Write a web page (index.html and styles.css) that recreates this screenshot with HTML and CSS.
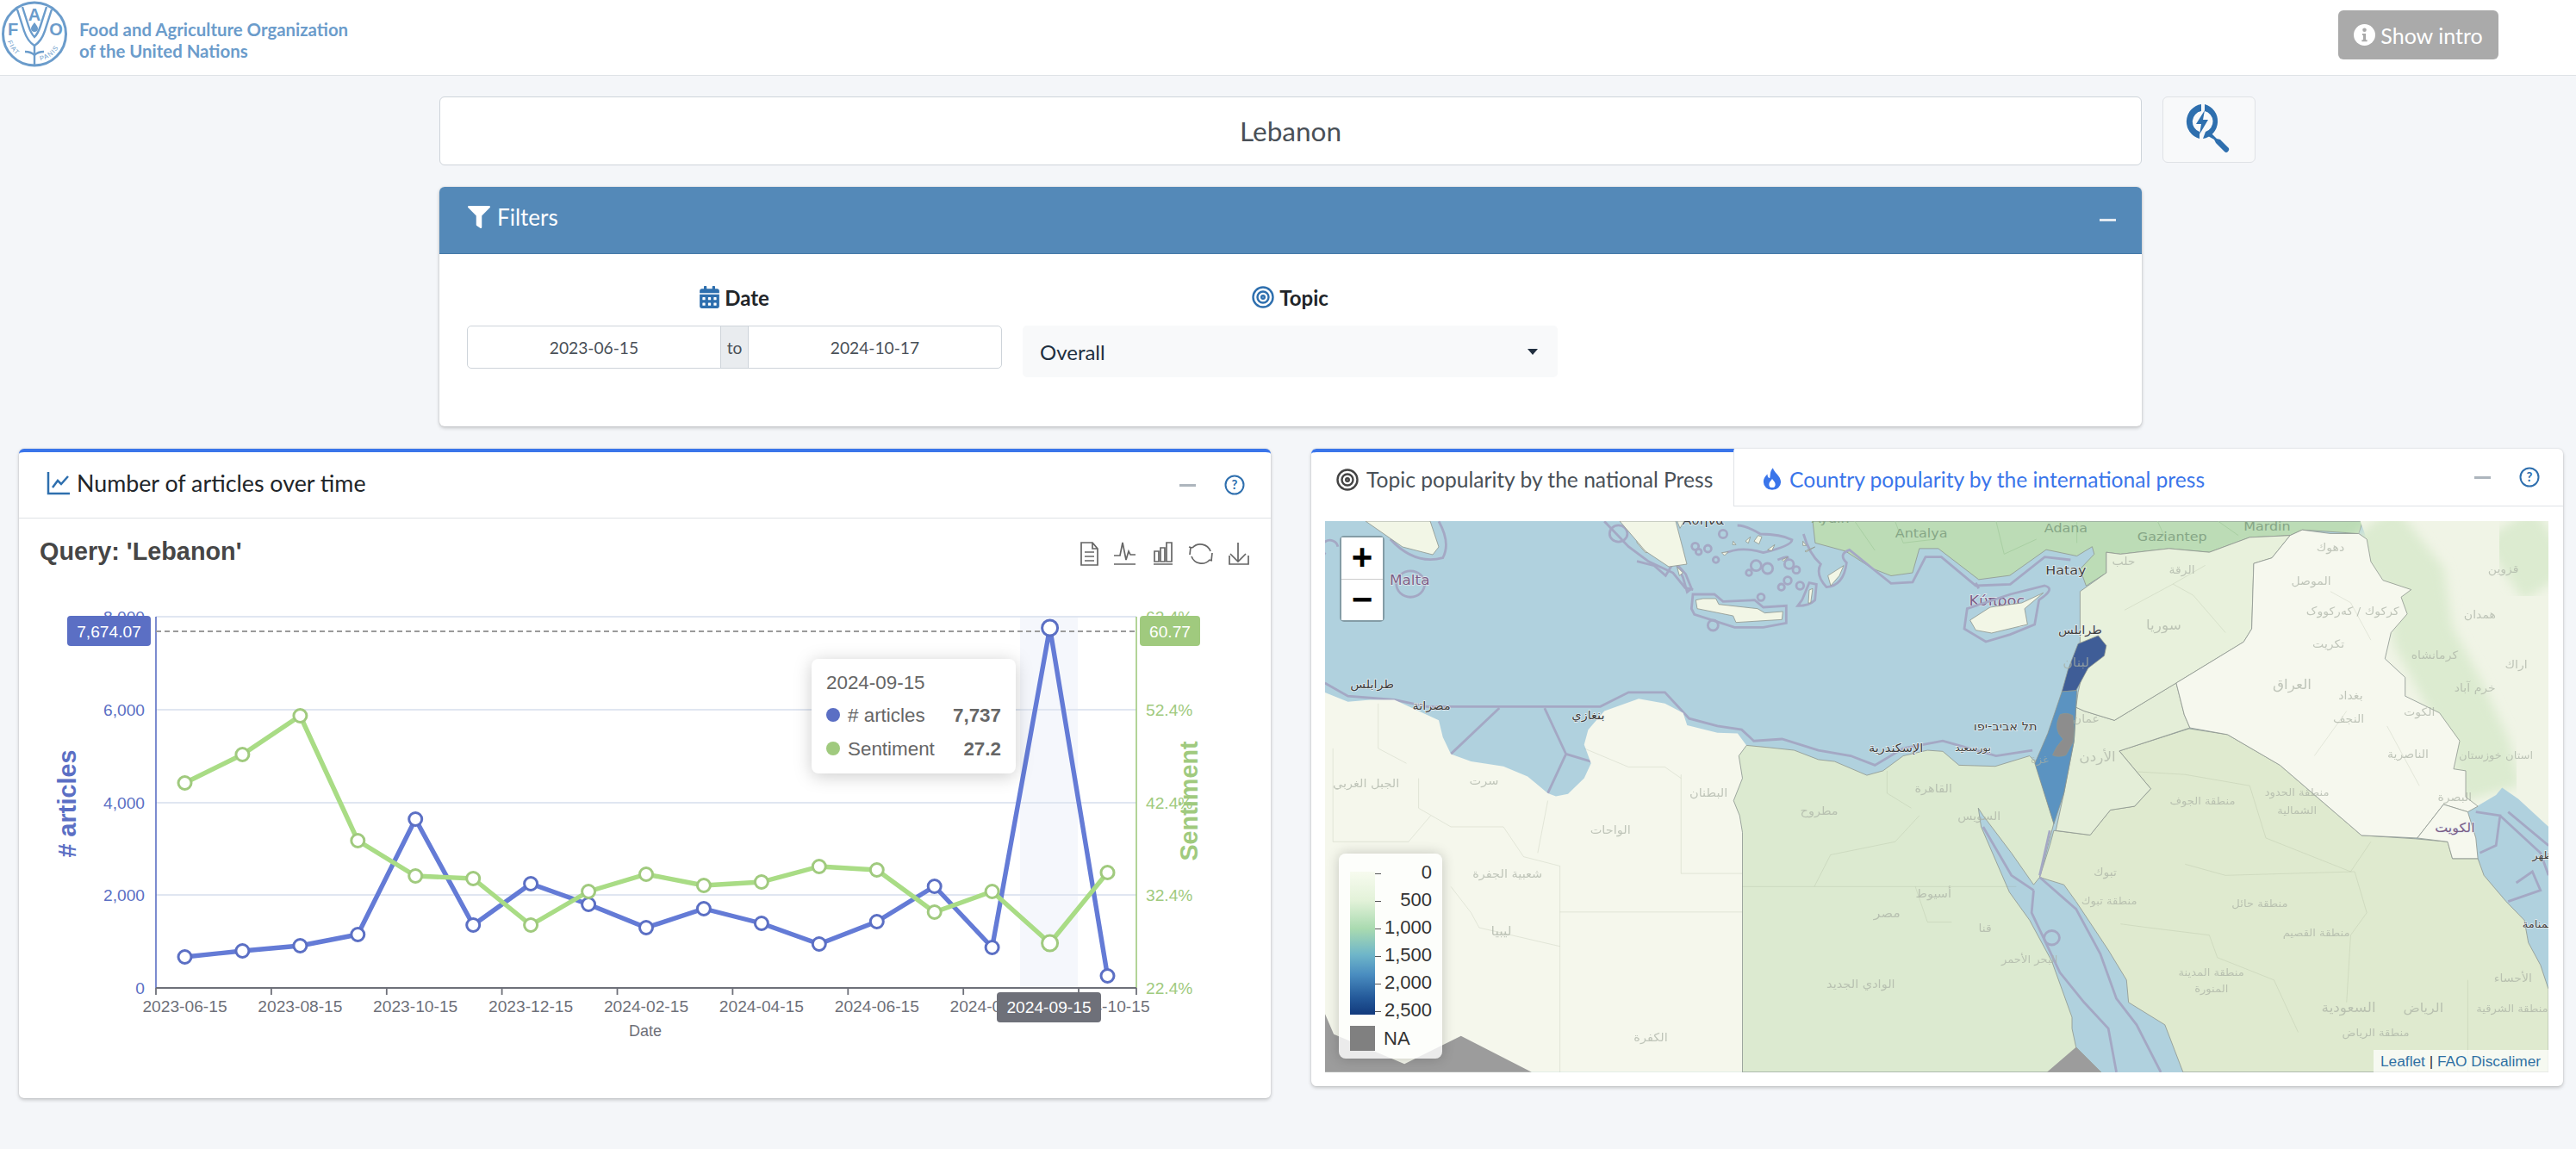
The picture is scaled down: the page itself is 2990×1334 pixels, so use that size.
FILE: index.html
```html
<!DOCTYPE html>
<html lang="en">
<head>
  <meta charset="UTF-8" />
  <title>FAO Media Monitor</title>
  <link rel="stylesheet" href="styles.css">
</head>
<body>
  <header class="topbar">
    <div class="brand">
      <svg class="brand-logo" viewBox="0 0 80 80">
        <defs>
          <path id="logoArcL" d="M9 48 A32 32 0 0 0 37 71" />
          <path id="logoArcR" d="M43 71 A32 32 0 0 0 71 48" />
        </defs>
        <circle cx="40" cy="39.5" r="36.5" fill="none" stroke="#6b9ccb" stroke-width="3" />
        <g fill="none" stroke="#6b9ccb" stroke-width="2.4">
          <path d="M20 11 L28 36 Q32 48 40 53 Q48 48 52 36 L60 11" />
          <path d="M26 8 L33 30 Q36 39 40 43 Q44 39 47 30 L54 8" />
          <path d="M40 53 V77" />
          <path d="M29 60 Q36 60 40 64 Q44 60 51 60" />
        </g>
        <path d="M40 26 q-4 5 -4 7 a4 4 0 0 0 8 0 q0 -2 -4 -7z" fill="#6b9ccb" />
        <g class="logo-letters">
          <text x="9" y="41">F</text>
          <text x="40" y="24" text-anchor="middle">A</text>
          <text x="65" y="41" text-anchor="middle">O</text>
        </g>
        <g class="logo-motto">
          <text><textPath href="#logoArcL">FIAT</textPath></text>
          <text><textPath href="#logoArcR" startOffset="4">PANIS</textPath></text>
        </g>
      </svg>
      <div class="brand-name">Food and Agriculture Organization<br>of the United Nations</div>
    </div>
    <div class="intro-btn">
      <svg class="icon-info" viewBox="0 0 24 24">
        <circle cx="12" cy="12" r="12" fill="#fff" />
        <circle cx="12" cy="6.5" r="2.2" fill="#aaa" />
        <path d="M9.5 10.5h4v7h1.5v2h-6v-2h1.5v-5h-1z" fill="#aaa" />
      </svg>
      Show intro
    </div>
  </header>

  <main class="page">
    <div class="search-row">
      <div class="search-box">Lebanon</div>
      <div class="search-btn">
        <svg viewBox="3 0 62 62" width="62" height="62">
          <path d="M25 1 A20.500 20.500 0 0 0 23 41 V33 A12.500 12.500 0 0 1 25 9z" fill="#2e6fae" />
          <path d="M29 1 A20.500 20.500 0 0 1 27 41 L30 33 A12.500 12.500 0 0 0 29 9z" fill="#2e6fae" />
          <path d="M29 8 L19 24 H25 L23 36 L33 19 H27z" fill="#2e6fae" />
          <path d="M37 35 L43 41 L47 42 L57 52 Q58 54 56 56 Q54 58 52 56 L42 46 L40 42 L33 38z" fill="#2e6fae" />
        </svg>
      </div>
    </div>

    <section class="filter-card">
      <div class="filter-head">
        <span class="filter-title">
          <svg class="icon-funnel" viewBox="0 0 512 512"><path d="M487.976 0H24.028C2.71 0-8.047 25.866 7.058 40.971L192 225.941V432c0 7.831 3.821 15.17 10.237 19.662l80 55.98C298.02 518.69 320 507.493 320 487.98V225.941l184.947-184.97C520.021 25.896 509.338 0 487.976 0z" /></svg>
          Filters
        </span>
        <span class="collapse-bar light"></span>
      </div>
      <div class="filter-body">
        <div class="filter-col">
          <div class="filter-label">
            <svg class="icon-cal" viewBox="0 0 448 512"><path d="M0 464c0 26.5 21.5 48 48 48h352c26.5 0 48-21.5 48-48V192H0v272zm320-196c0-6.6 5.4-12 12-12h40c6.6 0 12 5.4 12 12v40c0 6.6-5.4 12-12 12h-40c-6.6 0-12-5.4-12-12v-40zm0 128c0-6.6 5.4-12 12-12h40c6.6 0 12 5.4 12 12v40c0 6.6-5.4 12-12 12h-40c-6.6 0-12-5.4-12-12v-40zM192 268c0-6.6 5.4-12 12-12h40c6.6 0 12 5.4 12 12v40c0 6.6-5.4 12-12 12h-40c-6.6 0-12-5.4-12-12v-40zm0 128c0-6.6 5.4-12 12-12h40c6.6 0 12 5.4 12 12v40c0 6.6-5.4 12-12 12h-40c-6.6 0-12-5.4-12-12v-40zM64 268c0-6.6 5.4-12 12-12h40c6.6 0 12 5.4 12 12v40c0 6.6-5.4 12-12 12H76c-6.600 0-12-5.4-12-12v-40zm0 128c0-6.6 5.4-12 12-12h40c6.6 0 12 5.4 12 12v40c0 6.6-5.4 12-12 12H76c-6.6 0-12-5.4-12-12v-40zM400 64h-48V16c0-8.8-7.2-16-16-16h-32c-8.8 0-16 7.2-16 16v48H160V16c0-8.8-7.2-16-16-16h-32c-8.8 0-16 7.2-16 16v48H48C21.5 64 0 85.5 0 112v48h448v-48c0-26.5-21.5-48-48-48z" /></svg>
            Date
          </div>
          <div class="date-range">
            <div class="date-val">2023-06-15</div>
            <div class="date-to">to</div>
            <div class="date-val">2024-10-17</div>
          </div>
        </div>
        <div class="filter-col">
          <div class="filter-label">
            <svg class="icon-target blue" viewBox="0 0 26 26"><circle cx="13" cy="13" r="11.500" /><circle cx="13" cy="13" r="6.500" /><circle cx="13" cy="13" r="1.800" /></svg>
            Topic
          </div>
          <div class="select-box">Overall<span class="select-arrow"></span></div>
        </div>
      </div>
    </section>

    <div class="panels">
      <!-- left: articles chart -->
      <section class="panel">
        <div class="panel-head">
          <div class="panel-title">
            <svg class="icon-chartline" viewBox="0 0 28 28"><path d="M2 1 V26 H27" /><path d="M7 19 L13 11 L17 15 L25 6" /></svg>
            Number of articles over time
          </div>
          <div class="panel-tools">
            <span class="collapse-bar"></span>
            <svg class="icon-help" viewBox="0 0 24 24"><circle cx="12" cy="12" r="10.500" /><text x="12" y="17" text-anchor="middle">?</text></svg>
          </div>
        </div>
        <svg class="chart" viewBox="22 602 1453 673" width="1453" height="673">
          <text class="chart-title" x="46" y="650">Query: 'Lebanon'</text>

          <g class="toolbox">
            <path d="M1255 630h13l6 7v19h-19z M1268 630v7h6 M1259 641h11 M1259 646h11 M1259 651h11" />
            <path d="M1293 645h7l3-15 4 20 3-10 2 4h6 M1293 655h25" />
            <path d="M1339 655h22 M1340 640h5v12h-5z M1347 636h5v16h-5z M1354 630h6v22h-6z" />
            <path d="M1384 636 A12.500 12.500 0 0 1 1405 640 M1381 644 l1 -9 M1404 650 A12.500 12.500 0 0 1 1383 646 M1407 642 l-1 9 M1384 636l-4-1 M1403 650l4 1" />
            <path d="M1437 630v22 M1428 643l9 9 9-9 M1427 645v10h22v-10" />
          </g>

          <rect class="band" x="1184" y="716" width="67" height="431" />
          <g class="grid">
            <path d="M181 716H1319 M181 824H1319 M181 932H1319 M181 1039H1319" />
          </g>
          <path class="axis-left" d="M181 716V1147" />
          <path class="axis-right" d="M1319 716V1147" />
          <path class="axis-bottom" d="M181 1147H1319 M181 1147v8 M314.900 1147v8 M448.800 1147v8 M582.600 1147v8 M716.500 1147v8 M850.400 1147v8 M984.300 1147v8 M1118.200 1147v8 M1252 1147v8 M1319 1147v8" />

          <g class="tick-left">
            <text x="168" y="716">8,000</text>
            <text x="168" y="824">6,000</text>
            <text x="168" y="932">4,000</text>
            <text x="168" y="1039">2,000</text>
            <text x="168" y="1147">0</text>
          </g>
          <g class="tick-right">
            <text x="1330" y="716">62.4%</text>
            <text x="1330" y="824">52.4%</text>
            <text x="1330" y="932">42.4%</text>
            <text x="1330" y="1039">32.4%</text>
            <text x="1330" y="1147">22.4%</text>
          </g>
          <g class="tick-x">
            <text x="214.500" y="1168">2023-06-15</text>
            <text x="348.400" y="1168">2023-08-15</text>
            <text x="482.200" y="1168">2023-10-15</text>
            <text x="616.100" y="1168">2023-12-15</text>
            <text x="750" y="1168">2024-02-15</text>
            <text x="883.900" y="1168">2024-04-15</text>
            <text x="1017.800" y="1168">2024-06-15</text>
            <text x="1151.600" y="1168">2024-08-15</text>
            <text x="1285.500" y="1168">2024-10-15</text>
          </g>
          <text class="x-name" x="749" y="1197">Date</text>
          <text class="y-name blue" transform="translate(78 933) rotate(-90)"># articles</text>
          <text class="y-name green" transform="translate(1380 930) rotate(-90)">Sentiment</text>

          <path class="pointer-line" d="M181 733H1319" />

          <polyline class="line-blue" points="214.500,1111 281.400,1104 348.400,1098 415.300,1085 482.200,951 549.200,1074 616.100,1026 683.100,1050 750,1077 816.900,1055 883.900,1072 950.800,1096 1017.800,1070 1084.700,1029 1151.600,1100 1218.600,729 1285.500,1133" />
          <g class="dots-blue">
            <circle cx="214.500" cy="1111" r="7.500" /><circle cx="281.400" cy="1104" r="7.500" /><circle cx="348.400" cy="1098" r="7.500" /><circle cx="415.300" cy="1085" r="7.500" /><circle cx="482.200" cy="951" r="7.500" /><circle cx="549.200" cy="1074" r="7.500" /><circle cx="616.100" cy="1026" r="7.500" /><circle cx="683.100" cy="1050" r="7.500" /><circle cx="750" cy="1077" r="7.500" /><circle cx="816.900" cy="1055" r="7.500" /><circle cx="883.900" cy="1072" r="7.500" /><circle cx="950.800" cy="1096" r="7.500" /><circle cx="1017.800" cy="1070" r="7.500" /><circle cx="1084.700" cy="1029" r="7.500" /><circle cx="1151.600" cy="1100" r="7.500" /><circle cx="1218.600" cy="729" r="9" /><circle cx="1285.500" cy="1133" r="7.500" />
          </g>
          <polyline class="line-green" points="214.500,909 281.400,876 348.400,831 415.300,976 482.200,1017 549.200,1020 616.100,1074 683.100,1035 750,1015 816.900,1028 883.900,1024 950.800,1006 1017.800,1010 1084.700,1059 1151.600,1035 1218.600,1095 1285.500,1013" />
          <g class="dots-green">
            <circle cx="214.500" cy="909" r="7.500" /><circle cx="281.400" cy="876" r="7.500" /><circle cx="348.400" cy="831" r="7.500" /><circle cx="415.300" cy="976" r="7.500" /><circle cx="482.200" cy="1017" r="7.500" /><circle cx="549.200" cy="1020" r="7.500" /><circle cx="616.100" cy="1074" r="7.500" /><circle cx="683.100" cy="1035" r="7.500" /><circle cx="750" cy="1015" r="7.500" /><circle cx="816.900" cy="1028" r="7.500" /><circle cx="883.900" cy="1024" r="7.500" /><circle cx="950.800" cy="1006" r="7.500" /><circle cx="1017.800" cy="1010" r="7.500" /><circle cx="1084.700" cy="1059" r="7.500" /><circle cx="1151.600" cy="1035" r="7.500" /><circle cx="1218.600" cy="1095" r="9" /><circle cx="1285.500" cy="1013" r="7.500" />
          </g>

          <rect class="pill-blue" x="78" y="715" width="97" height="35" rx="4" />
          <text class="pill-text" x="126.500" y="733">7,674.07</text>
          <rect class="pill-green" x="1323" y="715" width="70" height="35" rx="4" />
          <text class="pill-text" x="1358" y="733">60.77</text>
          <rect class="pill-gray" x="1157" y="1152" width="121" height="35" rx="4" />
          <text class="pill-text" x="1217.500" y="1169">2024-09-15</text>

          <g class="tip">
            <rect class="tip-box" x="942" y="765" width="237" height="133" rx="8" />
            <text class="tip-date" x="959" y="792">2024-09-15</text>
            <circle cx="967" cy="830" r="8" fill="#5b6fc4" />
            <text class="tip-name" x="984" y="830"># articles</text>
            <text class="tip-val" x="1162" y="830">7,737</text>
            <circle cx="967" cy="869" r="8" fill="#a0ca7e" />
            <text class="tip-name" x="984" y="869">Sentiment</text>
            <text class="tip-val" x="1162" y="869">27.2</text>
          </g>
        </svg>
      </section>

      <!-- right: map tabs -->
      <section class="panel panel-map">
        <div class="tab-head">
          <div class="tab active">
            <svg class="icon-target dark" viewBox="0 0 26 26"><circle cx="13" cy="13" r="11.500" /><circle cx="13" cy="13" r="6.500" /><circle cx="13" cy="13" r="1.800" /></svg>
            Topic popularity by the national Press
          </div>
          <div class="tab link">
            <svg class="icon-fire" viewBox="0 0 24 28"><path fill-rule="evenodd" d="M13 0 C14 6 23 10 23 18 A11 10 0 0 1 1 18 C1 13 4 10 6 8 C6 11 7 13 9 13 C10 8 9 4 13 0z M12 14 C10 17 8 18 8 21 A4 4 0 0 0 16 21 C16 18 14 17 12 14z" /></svg>
            Country popularity by the international press
          </div>
          <div class="panel-tools tab-tools">
            <span class="collapse-bar"></span>
            <svg class="icon-help" viewBox="0 0 24 24"><circle cx="12" cy="12" r="10.500" /><text x="12" y="17" text-anchor="middle">?</text></svg>
          </div>
        </div>
        <div class="map">
          <svg class="map-svg" viewBox="1538 605 1420 640" width="1420" height="640">
            <defs>
              <filter id="soft" x="-20%" y="-20%" width="140%" height="140%"><feGaussianBlur stdDeviation="14" /></filter>
            </defs>
            <rect x="1538" y="605" width="1420" height="640" fill="#b0d1de" />

            <!-- drawn in crop coords, U = (x-1520)*2.133, V = (y-600)*2.306 -->
            <g transform="translate(1520 600) scale(.46875 .43367)">
              <g class="sea-lines">
                <path d="M38 445 L95 480 L210 490 L290 508 H720 L790 470 H880 L940 540 L1010 560 L1070 570 L1100 600 L1170 595 L1260 625 L1340 640 L1400 665 L1470 620 L1568 600 L1700 640 L1790 625" />
                <path d="M470 512 L350 635 M582 512 L635 635 L590 740 M635 635 L697 655" />
                <circle cx="250" cy="180" r="35" />
                <path d="M40 100 a20 20 0 1 1 30 -20 M200 60 Q260 130 330 110 Q350 70 320 12 M730 12 L790 80 L840 120 L900 150 L930 190 L950 195" />
                <circle cx="765" cy="45" r="22" />
              </g>
              <path class="land libya" d="M38 470 L95 495 L150 490 L210 490 L290 530 L320 545 L330 590 L350 635 L400 655 L480 668 L540 695 L590 740 L610 748 L640 742 L680 700 L697 660 L680 610 L690 570 L730 520 L815 487 L880 500 L925 525 L935 558 L1010 578 L1060 580 L1082 612 L1063 640 L1072 700 L1050 760 L1065 800 L1072 845 V1487 H38z" />
              <path class="inner" d="M58 620 V870 M58 870 H245 L300 800 M170 500 V620 L240 660 M270 700 V780 L350 830 H480 L530 910 L620 935 V1487 M620 1058 H1072 M920 690 V955 H1072 M590 760 L565 900 M680 620 L790 670 H880 L920 700 M400 1060 L420 1100 L620 1150 M350 990 L400 1060" />
              <path class="land sudan" d="M38 1330 L60 1385 L235 1465 L375 1390 L550 1487 H38z" />
              <path class="land egypt" d="M1082 612 L1140 618 L1200 625 L1260 650 L1300 655 L1380 692 L1420 680 L1470 640 L1530 625 L1568 628 L1608 665 L1698 668 L1783 640 L1796 655 L1843 820 L1808 965 L1793 985 L1738 900 L1668 800 L1656 780 L1663 830 L1733 1005 L1783 1080 L1838 1190 L1888 1340 L1888 1370 L1898 1420 L1960 1487 H1072 V845 L1065 800 L1050 760 L1072 700 L1063 640z" />
              <path class="inner" d="M1072 990 H1750 M1250 990 L1290 905 L1450 870 L1510 800 M1500 990 L1530 1085 H1590 M1430 680 V740 L1490 780" />
              <path class="land turkey" d="M1246 12 L1252 70 L1327 92 L1393 138 L1440 158 L1493 150 L1510 85 L1557 85 L1657 168 L1734 157 L1824 88 L1900 105 L1938 80 L1943 100 L1908 140 L1923 185 L1973 150 L1973 95 L2008 100 L2128 85 L2228 95 L2328 55 L2428 50 L2458 35 L2598 45 L2608 12z" />
              <path class="inner turkey-lines" d="M1350 12 L1400 90 M1450 12 L1470 70 L1550 60 M1700 12 L1720 100 L1800 60 M1900 12 V70 M2100 12 L2120 60 M2250 12 L2300 50" />
              <path class="land sudan" d="M1826 1487 L1898 1420 L1960 1487z" />

              <g transform="translate(1568 0)">
                <path class="land iran" d="M1030 0 H1500 V860 L1325 780 L1295 750 L1295 680 L1265 675 L1280 600 L1230 525 L1145 480 V430 L1095 380 L1110 310 L1150 260 L1135 215 L1160 195 L1090 170 L1060 120 L1050 60z" />
                <path class="zagros" filter="url(#soft)" d="M1060 20 L1170 170 L1190 320 L1260 460 L1330 620 L1360 740" />
                <path class="zagros" filter="url(#soft)" d="M1400 20 L1500 180" />
                <path class="land gulf" d="M1315 780 L1370 745 L1385 725 L1425 755 L1500 830 V1265 L1480 1200 L1450 1140 L1440 1080 L1395 1030 L1340 960 L1325 915 L1320 860z" />
                <path class="land saudi" d="M275 840 L365 852 L415 785 L475 775 L515 728 L437 627 L610 567 L705 583 L835 665 L1037 853 L1170 862 L1250 870 L1262 915 L1325 915 L1340 960 L1395 1030 L1440 1080 L1450 1140 L1480 1200 L1500 1265 V1487 H595 L550 1360 L460 1300 L455 1240 L410 1160 L330 1030 L300 985 L240 965 L265 880z" />
                <path class="inner" d="M440 680 L600 690 L760 720 L800 860 L1010 950 L1060 870 M600 930 L700 960 L1020 950 L1050 1060 L1010 1120 L1000 1300 M440 1090 L510 1100 L660 1120 L680 1180 L820 1240 L880 1380 M1300 1240 V1487" />
                <path class="land jordan" d="M330 510 L350 520 L425 545 L578 445 L598 530 L612 565 L437 627 L515 728 L475 775 L415 785 L365 852 L280 840 L300 740 L325 600z" />
                <path class="land syria" d="M340 200 L405 150 V95 L440 100 L560 85 L660 95 L760 55 L860 50 L815 110 L770 125 L765 300 L745 335 L578 445 L425 545 L350 520 L330 510 L335 470 L350 400 L340 340z" />
                <path class="inner" d="M570 180 L620 210 L700 310 M450 250 L570 180 L650 130" />
                <path class="land iraq" d="M860 50 L890 35 L960 45 L1030 45 L1050 60 L1060 120 L1090 170 L1160 195 L1135 215 L1150 260 L1110 310 L1095 380 L1145 430 V480 L1230 525 L1280 600 L1265 675 L1295 680 V750 L1325 775 L1300 790 L1240 770 L1175 860 L1037 853 L835 665 L705 583 L612 565 L598 530 L578 445 L745 335 L765 300 L770 125 L815 110z" />
                <path class="land iraq" d="M1240 770 L1300 790 L1320 860 L1325 915 H1262 L1250 870 L1175 860z" />
                <path class="inner" d="M960 200 L1010 230 L1060 330 M1000 520 L920 640 M1100 560 L1180 720" />
                <path class="sea-lines-path" d="M240 965 L330 1050 L390 1170 L430 1290 L480 1360 L540 1487 M225 1000 L220 1060 L290 1220 L350 1300 L410 1370 L430 1487 M100 830 L170 960 L225 1000 M265 840 L240 960 M1320 790 L1380 800 L1370 880 L1330 900 M1380 800 L1480 900 L1500 960 M1400 1030 L1480 1000 L1460 950 L1420 980 M1400 790 L1500 880" />
                <circle class="sea-lines-path" cx="270" cy="1127" r="19" />
                <path class="land lebanon" d="M335 340 L385 318 L405 345 L400 372 L360 405 L330 465 L295 468 L310 410z" />
                <path class="land israel" d="M295 468 L332 465 L330 510 L325 600 L300 740 L275 822 L228 660 L260 580z" />
                <path class="land westbank" d="M290 530 Q305 522 322 532 Q328 570 322 605 L305 638 Q285 645 272 638 Q280 615 298 595 Q272 570 290 530z" />
              </g>

              <g class="lbl-faint">
                <text x="140" y="725" font-size="31">الجبل الغربي</text>
                <text x="432" y="718" font-size="31">سرت</text>
                <text x="988" y="750" font-size="31">البطنان</text>
                <text x="745" y="848" font-size="31">الواحات</text>
                <text x="490" y="966" font-size="31">شعبية الجفرة</text>
                <text x="475" y="1120" font-size="34">ليبيا</text>
                <text x="845" y="1405" font-size="31">الكفرة</text>
                <text x="1262" y="798" font-size="31">مطروح</text>
                <text x="1430" y="1072" font-size="34">مصر</text>
                <text x="1365" y="1262" font-size="31">الوادي الجديد</text>
                <text x="1545" y="1020" font-size="31">أسيوط</text>
                <text x="1545" y="738" font-size="31">القاهرة</text>
              </g>
              <g class="lbl-dark">
                <text x="155" y="458" font-size="31">طرابلس</text>
                <text x="302" y="516" font-size="31">مصراتة</text>
                <text x="690" y="542" font-size="31">بنغازي</text>
                <text x="1452" y="630" font-size="31">الإسكندرية</text>
                <text x="975" y="20" font-size="33">Αθήνα</text>
              </g>
              <text class="lbl-purple" x="248" y="182" font-size="36">Malta</text>
              <g class="lbl-green">
                <text x="1515" y="55" font-size="34">Antalya</text>
                <text x="1290" y="16" font-size="34">Aydın</text>
              </g>

              <g transform="translate(1568 0)">
                <g class="lbl-green">
                  <text x="305" y="42" font-size="34">Adana</text>
                  <text x="568" y="65" font-size="34">Gaziantep</text>
                  <text x="803" y="38" font-size="34">Mardin</text>
                </g>
                <g class="lbl-faint">
                  <text x="448" y="128" font-size="30">حلب</text>
                  <text x="592" y="152" font-size="30">الرقة</text>
                  <text x="547" y="302" font-size="36">سوريا</text>
                  <text x="330" y="402" font-size="34">لبنان</text>
                  <text x="960" y="92" font-size="30">دهوك</text>
                  <text x="912" y="182" font-size="30">الموصل</text>
                  <text x="1015" y="262" font-size="30">كركوك / کەرکووک</text>
                  <text x="1388" y="150" font-size="30">قزوين</text>
                  <text x="1330" y="272" font-size="30">همدان</text>
                  <text x="955" y="350" font-size="30">تكريت</text>
                  <text x="1218" y="380" font-size="30">كرمانشاه</text>
                  <text x="1420" y="405" font-size="30">اراك</text>
                  <text x="865" y="462" font-size="36">العراق</text>
                  <text x="1010" y="488" font-size="30">بغداد</text>
                  <text x="1318" y="468" font-size="30">خرم آباد</text>
                  <text x="1180" y="533" font-size="30">الكوت</text>
                  <text x="1005" y="552" font-size="30">النجف</text>
                  <text x="1152" y="645" font-size="30">الناصرية</text>
                  <text x="1370" y="648" font-size="28">استان خوزستان</text>
                  <text x="355" y="550" font-size="30">عمان</text>
                  <text x="383" y="655" font-size="36">الأردن</text>
                  <text x="240" y="660" font-size="28">غزة</text>
                  <text x="643" y="770" font-size="28">منطقة الجوف</text>
                  <text x="877" y="748" font-size="28">منطقة الحدود</text>
                  <text x="877" y="795" font-size="28">الشمالية</text>
                  <text x="90" y="812" font-size="30">السويس</text>
                  <text x="402" y="962" font-size="30">تبوك</text>
                  <text x="412" y="1037" font-size="28">منطقة تبوك</text>
                  <text x="785" y="1045" font-size="28">منطقة حائل</text>
                  <text x="105" y="1112" font-size="30">قنا</text>
                  <text x="925" y="1122" font-size="28">منطقة القصيم</text>
                  <text x="215" y="1195" font-size="28">البحر الأحمر</text>
                  <text x="665" y="1228" font-size="28">منطقة المدينة</text>
                  <text x="665" y="1272" font-size="28">المنورة</text>
                  <text x="1412" y="1245" font-size="30">الأحساء</text>
                  <text x="1005" y="1325" font-size="36">السعودية</text>
                  <text x="1190" y="1325" font-size="34">الرياض</text>
                  <text x="1410" y="1327" font-size="28">منطقة الشرقية</text>
                  <text x="1072" y="1390" font-size="28">منطقة الرياض</text>
                  <text x="1268" y="762" font-size="30">البصرة</text>
                </g>
                <g class="lbl-dark">
                  <text x="305" y="155" font-size="34">Hatay</text>
                  <text x="340" y="314" font-size="31">طرابلس</text>
                  <text x="155" y="572" font-size="31">תל אביב-יפו</text>
                  <text x="75" y="628" font-size="26">بورسعيد</text>
                  <text x="1485" y="915" font-size="28">ظهر</text>
                  <text x="1475" y="1100" font-size="28">المنامة</text>
                </g>
                <g class="lbl-purple">
                  <text x="135" y="238" font-size="38">Κύπρος</text>
                  <text x="150" y="292" font-size="38">Kıbrıs</text>
                  <text x="1268" y="845" font-size="34">الكويت</text>
                </g>
              </g>
            </g>

            <!-- aegean, crop coords at 3x -->
            <g transform="translate(1900 600) scale(.33333)">
              <g class="sea-lines">
                <path d="M0 155 L60 170 L100 205 L130 155 L170 200 L190 250 L175 262 L160 210 L130 150 M190 320 L195 270 L270 270 L300 295 L410 290 L440 315 L520 310 L520 370 L440 385 L340 385 L200 340z" />
                <circle cx="203" cy="103" r="12" /><circle cx="247" cy="111" r="12" /><circle cx="215" cy="122" r="10" />
                <circle cx="265" cy="378" r="18" /><circle cx="432" cy="280" r="12" /><circle cx="568" cy="240" r="13" />
                <circle cx="503" cy="245" r="11" /><circle cx="525" cy="222" r="13" /><circle cx="415" cy="170" r="18" />
                <circle cx="455" cy="180" r="18" /><circle cx="390" cy="195" r="10" /><circle cx="275" cy="150" r="10" />
                <circle cx="530" cy="165" r="16" /><circle cx="555" cy="185" r="12" /><circle cx="300" cy="60" r="14" />
                <path d="M300 130 Q360 100 440 125 Q540 100 540 80 Q500 60 430 60 Q380 30 350 30 M490 150 Q540 130 520 150 M580 60 Q600 130 640 165 Q620 200 660 245 Q720 240 730 160 Q700 130 740 115 L820 180 L885 232 L960 228 L1005 140 L1060 140 L1180 240 L1300 235 L1420 140 L1510 150" />
                <path d="M1190 250 L1180 230 M1150 320 L1300 270 L1420 240 Q1460 250 1400 290 L1385 375 L1300 410 L1215 435 L1140 390z" />
                <path d="M560 310 Q600 310 620 290 L625 235 L600 230 L575 290z" />
              </g>
              <path class="land islet" d="M0 15 H125 L170 165 L120 130 L95 160 L85 120 L30 125 L0 90z" />
              <path class="land islet" d="M205 290 L230 285 L275 285 L285 305 L420 320 L445 335 L508 330 L505 358 L345 368 L335 345 L210 320z" />
              <path class="land islet" d="M665 205 L720 170 L705 205 L675 240z" />
              <path class="land islet" d="M600 255 L612 250 L605 300 L597 300z" />
              <path class="land islet" d="M1160 360 L1230 315 L1340 300 L1415 265 L1350 320 L1360 375 L1235 405 L1180 395z" />
              <path class="land islet" d="M408 85 L422 65 L435 70 L425 95z M378 85 L395 70 L388 92z M295 125 L318 122 L305 135z M455 115 L480 97 L470 118z M585 120 L620 105 L590 122z M140 175 L160 195 L148 205z M505 150 L525 140 L510 155z M335 85 L345 97 L333 97z M578 85 L590 100 L578 100z" />
              <path class="land islet" d="M140 15 L165 15 L150 40z" />
            </g>

            <!-- sicily corner -->
            <path class="land islet" d="M1585 605 H1660 L1670 635 L1663 644 L1628 635z" />
            <path class="land islet" d="M1880 605 H1945 L1958 655 L1937 658 L1925 650 L1910 640z" />
          </svg>

          <div class="zoom-ctl">
            <div class="zoom-btn">+</div>
            <div class="zoom-btn">−</div>
          </div>

          <div class="legend">
            <div class="legend-scale">
              <div class="legend-bar"></div>
              <div class="legend-labels">
                <div class="legend-row"><span>0</span></div>
                <div class="legend-row"><span>500</span></div>
                <div class="legend-row"><span>1,000</span></div>
                <div class="legend-row"><span>1,500</span></div>
                <div class="legend-row"><span>2,000</span></div>
                <div class="legend-row"><span>2,500</span></div>
              </div>
            </div>
            <div class="legend-na"><div class="na-swatch"></div>NA</div>
          </div>

          <div class="attrib"><span class="attrib-link">Leaflet</span> | <span class="attrib-link">FAO Discalimer</span></div>
        </div>
      </section>
    </div>
  </main>
</body>
</html>
```

FILE: styles.css
```css
* {
  box-sizing: border-box;
}

body {
  margin: 0;
  background-color: #f4f6f9;
  font-family: Lato, "Noto Sans", sans-serif;
  color: #212529;
  min-height: 1334px;
}

/* top bar */
.topbar {
  height: 88px;
  background-color: #fff;
  border-bottom: 1px solid #dee2e6;
  display: flex;
  justify-content: space-between;
  align-items: flex-start;
  padding: 0 90px 0 0;
}

.brand {
  display: flex;
  align-items: center;
  height: 80px;
}

.brand-logo {
  width: 80px;
  height: 80px;
  margin-right: 12px;
}

.logo-letters {
  font-family: "Liberation Sans", sans-serif;
  font-weight: bold;
  font-size: 20px;
  fill: #6b9ccb;
}

.logo-motto {
  font-family: "Liberation Sans", sans-serif;
  font-size: 7.5px;
  letter-spacing: 1px;
  fill: #6b9ccb;
}

.brand-name {
  font-size: 20.400px;
  line-height: 25px;
  font-weight: 700;
  color: #6b9ccb;
  margin-top: 14px;
}

.intro-btn {
  margin-top: 12px;
  width: 186px;
  height: 57px;
  background-color: #aaa;
  border-radius: 6px;
  color: #fff;
  font-size: 25px;
  display: flex;
  align-items: center;
  justify-content: center;
  gap: 6px;
}

.icon-info {
  width: 25px;
  height: 25px;
}

/* search */
.page {
  padding-top: 24px;
}

.search-row {
  display: flex;
  gap: 24px;
  margin-left: 510px;
  align-items: flex-start;
}

.search-box {
  width: 1976px;
  height: 80px;
  background-color: #fff;
  border: 1px solid #ced4da;
  border-radius: 6px;
  font-size: 31.500px;
  color: #495057;
  display: flex;
  align-items: center;
  justify-content: center;
}

.search-btn {
  width: 108px;
  height: 77px;
  background-color: #f8f9fa;
  border: 1px solid #dfe2e6;
  border-radius: 6px;
  display: flex;
  align-items: center;
  justify-content: center;
}

/* filters */
.filter-card {
  width: 1976px;
  height: 278px;
  margin: 25px 0 26px 510px;
  background-color: #fff;
  border-radius: 6px;
  box-shadow: 0 0 2px rgba(0, 0, 0, .13), 0 2px 4px rgba(0, 0, 0, .2);
}

.filter-head {
  height: 78px;
  background-color: #5489b8;
  border-bottom: 1px solid #457aa8;
  border-radius: 6px 6px 0 0;
  color: #fff;
  display: flex;
  justify-content: space-between;
  align-items: center;
  padding: 0 30px 0 32px;
}

.filter-title {
  font-size: 26px;
  display: flex;
  align-items: center;
  gap: 7px;
  margin-top: -8px;
}

.icon-funnel {
  width: 28px;
  height: 26px;
  fill: #fff;
}

.collapse-bar {
  display: inline-block;
  width: 19px;
  height: 3px;
  background-color: #adb5bd;
}

.collapse-bar.light {
  background-color: #e3eaf1;
}

.filter-body {
  display: flex;
  gap: 24px;
  padding: 35px 32px 0;
}

.filter-col {
  width: 621px;
}

.filter-label {
  display: flex;
  align-items: center;
  justify-content: center;
  gap: 6px;
  height: 30px;
  font-size: 24px;
  font-weight: 700;
  margin-bottom: 18px;
}

.icon-cal {
  width: 23px;
  height: 26px;
  fill: #2e6fae;
}

.icon-target {
  width: 26px;
  height: 26px;
  fill: none;
  stroke-width: 2.4;
}

.icon-target.blue {
  stroke: #2e6fae;
}

.icon-target.dark {
  stroke: #444;
}

.date-range {
  display: flex;
  height: 50px;
  border: 1px solid #ced4da;
  border-radius: 5px;
  font-size: 19.200px;
  color: #495057;
}

.date-val {
  flex: 1;
  display: flex;
  align-items: center;
  justify-content: center;
}

.date-to {
  width: 33px;
  background-color: #e9ecef;
  border-left: 1px solid #ced4da;
  border-right: 1px solid #ced4da;
  display: flex;
  align-items: center;
  justify-content: center;
}

.select-box {
  height: 60px;
  background-color: #f8f9fa;
  border-radius: 5px;
  padding: 0 20px;
  font-size: 24px;
  color: #212f3f;
  display: flex;
  align-items: center;
  justify-content: space-between;
}

.select-arrow {
  width: 0;
  height: 0;
  border-left: 6px solid transparent;
  border-right: 6px solid transparent;
  border-top: 7px solid #212f3f;
  margin-right: 3px;
}

/* bottom panels */
.panels {
  display: flex;
  gap: 47px;
  margin-left: 22px;
  align-items: flex-start;
}

.panel {
  width: 1453px;
  height: 754px;
  background-color: #fff;
  border-top: 4px solid #3a75ea;
  border-radius: 6px;
  box-shadow: 0 0 2px rgba(0, 0, 0, .13), 0 2px 4px rgba(0, 0, 0, .2);
}

.panel-map {
  height: 740px;
  border-top: 0;
}

.panel-head {
  height: 77px;
  border-bottom: 1px solid #dfe2e6;
  display: flex;
  justify-content: space-between;
  align-items: center;
  padding: 0 30px 0 32px;
}

.panel-title {
  font-size: 26.800px;
  display: flex;
  align-items: center;
  gap: 7px;
  margin-top: -4px;
}

.icon-chartline {
  width: 28px;
  height: 28px;
  fill: none;
  stroke: #2e6fae;
  stroke-width: 2.5;
}

.panel-tools {
  display: flex;
  align-items: center;
  gap: 33px;
}

.icon-help {
  width: 24px;
  height: 24px;
  fill: none;
  stroke: #2e6fae;
  stroke-width: 2;
}

.icon-help text {
  font-family: Lato, sans-serif;
  font-size: 15px;
  font-weight: 700;
  fill: #2e6fae;
  stroke: none;
}

/* chart */
.chart {
  display: block;
}

.chart text {
  font-family: "Liberation Sans", sans-serif;
  dominant-baseline: central;
}

.chart .chart-title {
  font-size: 28.800px;
  font-weight: bold;
  fill: #464646;
  dominant-baseline: auto;
}

.toolbox path {
  fill: none;
  stroke: #666;
  stroke-width: 1.700;
}

.band {
  fill: #f5f7fc;
}

.grid path {
  stroke: #e0e6f1;
  stroke-width: 2;
  fill: none;
}

.axis-left {
  stroke: #5b6fc4;
  stroke-width: 1.600;
}

.axis-right {
  stroke: #a0ca7e;
  stroke-width: 1.600;
}

.axis-bottom {
  stroke: #6e7079;
  stroke-width: 1.800;
  fill: none;
}

.tick-left text {
  font-size: 19.200px;
  fill: #5b6fc4;
  text-anchor: end;
}

.tick-right text {
  font-size: 19.200px;
  fill: #a0ca7e;
}

.tick-x text,
.x-name {
  font-size: 19.200px;
  fill: #6e7079;
  text-anchor: middle;
}

.x-name {
  font-size: 18px;
}

.chart .y-name {
  font-size: 28.800px;
  font-weight: bold;
  text-anchor: middle;
}

.y-name.blue {
  fill: #5b6fc4;
}

.y-name.green {
  fill: #a0ca7e;
}

.pointer-line {
  stroke: #9a9a9a;
  stroke-width: 1.800;
  stroke-dasharray: 6 4;
  fill: none;
}

.line-blue,
.line-green {
  fill: none;
  stroke-width: 5.400;
  stroke-linejoin: round;
}

.line-blue {
  stroke: #647bd6;
}

.line-green {
  stroke: #a9dc85;
}

.dots-blue circle {
  fill: #fff;
  stroke: #5b6fc4;
  stroke-width: 3;
}

.dots-green circle {
  fill: #fff;
  stroke: #a0ca7e;
  stroke-width: 3;
}

.pill-blue {
  fill: #5b6fc4;
}

.pill-green {
  fill: #a0ca7e;
}

.pill-gray {
  fill: #6e7079;
}

.chart .pill-text {
  font-size: 19.200px;
  fill: #fff;
  text-anchor: middle;
}

.tip-box {
  fill: #fff;
  filter: drop-shadow(0 3px 10px rgba(0, 0, 0, .2));
}

.tip-date,
.tip-name {
  font-size: 22.400px;
  fill: #666;
}

.tip-val {
  font-size: 22.400px;
  font-weight: bold;
  fill: #666;
  text-anchor: end;
}

/* map panel */
.tab-head {
  height: 67px;
  display: flex;
  align-items: stretch;
  border-bottom: 1px solid #dfe2e6;
}

.tab {
  font-size: 24.600px;
  display: flex;
  align-items: center;
  gap: 9px;
}

.tab.active {
  width: 491px;
  padding-left: 29px;
  white-space: nowrap;
  color: #495057;
  background-color: #fff;
  border-top: 4px solid #3a75ea;
  border-right: 1px solid #dfe2e6;
  border-radius: 6px 0 0 0;
  margin-bottom: -1px;
}

.tab.link {
  padding-left: 33px;
  padding-top: 4px;
  color: #3a75ea;
}

.icon-fire {
  width: 22px;
  height: 26px;
  fill: #3a75ea;
}

.tab-tools {
  margin-left: auto;
  padding-right: 27px;
}

.map {
  position: relative;
  width: 1420px;
  height: 640px;
  margin: 17px 0 0 16px;
  overflow: hidden;
}

.map-svg {
  display: block;
}

.land {
  stroke: #8e968e;
  stroke-width: .8;
  vector-effect: non-scaling-stroke;
}

.libya { fill: #f5f7ec; stroke: none; }
.sudan { fill: #9c9c9c; stroke: none; }
.egypt { fill: #dcead0; }
.turkey { fill: #bcdcb6; }
.iran { fill: #f0f4e6; stroke: none; }
.gulf { fill: #b0d1de; stroke: none; }
.saudi { fill: #dfeacf; }
.jordan { fill: #e4eed8; }
.syria { fill: #e8f1dc; }
.iraq { fill: #f6f8ee; }
.lebanon { fill: #3f5d97; }
.israel { fill: #5b93c1; }
.westbank { fill: #8d8d8d; }
.islet { fill: #f2f6e6; }

.zagros {
  fill: none;
  stroke: #dcebd0;
  stroke-width: 70;
  vector-effect: non-scaling-stroke;
}

.inner {
  fill: none;
  stroke: rgba(140, 150, 120, .18);
  stroke-width: 1;
  vector-effect: non-scaling-stroke;
}

.turkey-lines {
  stroke: #a9cfa3;
}

.sea-lines path,
.sea-lines circle,
.sea-lines-path {
  fill: none;
  stroke: #a4a8c4;
  stroke-width: 2.800;
  vector-effect: non-scaling-stroke;
}

.map-svg text {
  font-family: "DejaVu Sans", "Noto Sans", sans-serif;
  text-anchor: middle;
}

.lbl-faint text {
  fill: #a9b0a4;
  opacity: .7;
}

.lbl-dark text {
  fill: #3f3f3f;
  stroke: #e8eef0;
  stroke-width: 3px;
  paint-order: stroke;
}

.lbl-purple,
.lbl-purple text {
  fill: #7b5f87;
  stroke: #e4e8ee;
  stroke-width: 3px;
  paint-order: stroke;
}

.lbl-green text {
  fill: #86a686;
}

.zoom-ctl {
  position: absolute;
  left: 17px;
  top: 17px;
  width: 52px;
  border: 2px solid rgba(0, 0, 0, .25);
  border-radius: 5px;
  background-clip: padding-box;
}

.zoom-btn {
  height: 48px;
  background-color: #fff;
  font-family: "Liberation Sans", sans-serif;
  font-size: 42px;
  font-weight: bold;
  line-height: 46px;
  text-align: center;
  color: #000;
}

.zoom-btn + .zoom-btn {
  border-top: 1px solid #ccc;
}

.legend {
  position: absolute;
  left: 16px;
  top: 386px;
  width: 120px;
  height: 238px;
  padding: 21px 12px 0 13px;
  background-color: rgba(255, 255, 255, .8);
  border-radius: 8px;
  box-shadow: 0 0 15px rgba(0, 0, 0, .2);
  font-family: "Liberation Sans", sans-serif;
  font-size: 22px;
  color: #333;
}

.legend-scale {
  display: flex;
  height: 166px;
}

.legend-bar {
  width: 29px;
  height: 166px;
  background: linear-gradient(#f7fbef 0%, #e3f2d9 20%, #a9dab0 40%, #6fb6c9 58%, #4a8dc0 72%, #245a9a 88%, #123a7c 100%);
}

.legend-labels {
  flex: 1;
  margin-top: -11px;
}

.legend-row {
  height: 32px;
  line-height: 24px;
  text-align: right;
  position: relative;
}

.legend-row::before {
  content: "";
  position: absolute;
  left: 0;
  top: 13px;
  width: 7px;
  height: 1px;
  background-color: #555;
}

.legend-na {
  display: flex;
  align-items: center;
  gap: 10px;
  margin-top: 13px;
}

.na-swatch {
  width: 29px;
  height: 29px;
  background-color: #808080;
}

.attrib {
  position: absolute;
  right: 0;
  bottom: 0;
  width: 203px;
  height: 26px;
  padding-left: 8px;
  background-color: rgba(255, 255, 255, .7);
  font-family: "Liberation Sans", sans-serif;
  font-size: 17.300px;
  line-height: 26px;
  color: #333;
  white-space: nowrap;
}

.attrib-link {
  color: #2f70a3;
}
```
